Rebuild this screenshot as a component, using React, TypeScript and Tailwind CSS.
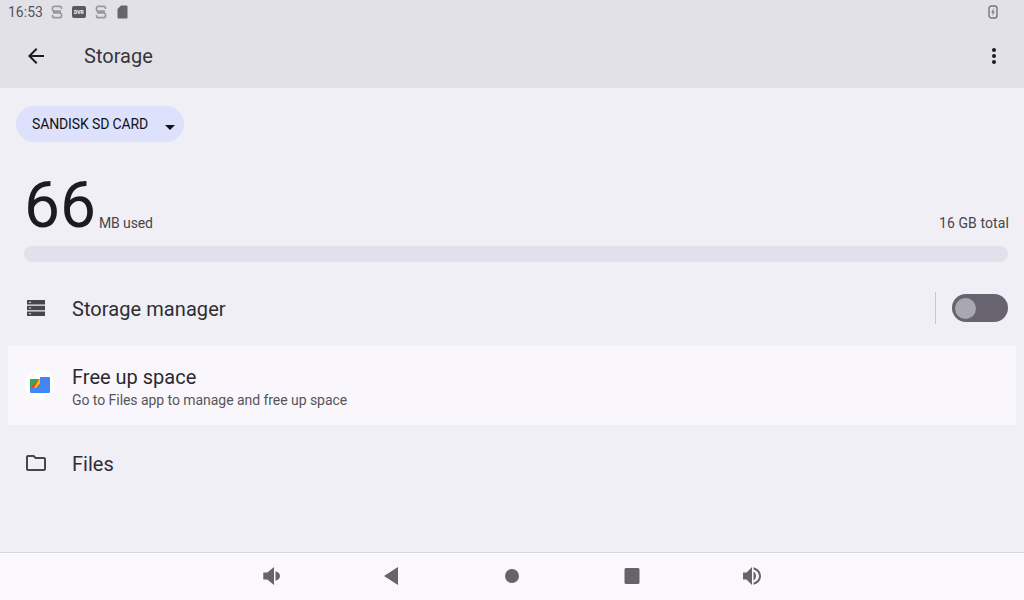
const font = { fontFamily: 'Roboto, sans-serif' }

function SyncS() {
  return (
    <svg width="12" height="14" viewBox="0 0 12 14" fill="none" stroke="#9a989f" strokeWidth="1.7">
      <path d="M10.500 4V3.300c0-1.300-1-2-2-2h-5c-1 0-2 .7-2 2v1.200c0 1 1 1.700 2 1.700H10" />
      <path d="M1.500 10v.7c0 1.300 1 2 2 2h5c1 0 2-.7 2-2V9.500c0-1-1-1.700-2-1.700H2" />
    </svg>
  )
}

function StatusBar() {
  return (
    <div className="flex h-6 items-center pl-[8px] pr-[26px]">
      <span className="text-[14px] leading-none text-[#55535a]">16:53</span>
      <span className="ml-[8px] flex"><SyncS /></span>
      <span className="ml-[9px] flex h-[12px] w-[14px] items-center justify-center rounded-[2px] bg-[#5b595f] text-[5px] font-bold leading-none text-white">
        DVR
      </span>
      <span className="ml-[9px] flex"><SyncS /></span>
      <svg className="ml-[10px]" width="11" height="14" viewBox="0 0 11 14">
        <path d="M4 .5h5.500a1 1 0 0 1 1 1v11a1 1 0 0 1-1 1h-8a1 1 0 0 1-1-1V4z" fill="#67656b" />
      </svg>
      <svg className="ml-auto" width="10" height="14" viewBox="0 0 10 14" fill="none">
        <rect x="1" y="1" width="8" height="12" rx="2.500" stroke="#77757b" strokeWidth="1.400" />
        <path d="M5.800 3 3.200 7.500h1.600l-.5 3.500 2.500-4.500H5.200z" fill="#77757b" />
      </svg>
    </div>
  )
}

function Toolbar() {
  return (
    <div className="flex h-16 items-center">
      <div className="flex w-[84px] justify-start pl-[24px]">
        <svg width="24" height="24" viewBox="0 0 24 24" fill="#1d1b20">
          <path d="M20 11H7.830l5.590-5.590L12 4l-8 8 8 8 1.410-1.410L7.830 13H20z" />
        </svg>
      </div>
      <span className="text-[20px] leading-none text-[#37353b]">Storage</span>
      <div className="ml-auto flex flex-col gap-[2px] pr-[28px]">
        <span className="h-1 w-1 rounded-full bg-[#1d1b20]" />
        <span className="h-1 w-1 rounded-full bg-[#1d1b20]" />
        <span className="h-1 w-1 rounded-full bg-[#1d1b20]" />
      </div>
    </div>
  )
}

function UsageSummary() {
  return (
    <div className="pl-6 pr-4">
      <div className="flex items-end justify-between">
        <div className="flex items-end">
          <span className="text-[64px] font-normal leading-[64px] text-[#1d1b20]">66</span>
          <span className="mb-[6px] ml-[3px] text-[14px] leading-[18px] tracking-[-0.1px] text-[#47454b]">MB used</span>
        </div>
        <span className="mb-[6px] mr-[-1px] text-[14px] leading-[18px] tracking-[0.1px] text-[#47454b]">16 GB total</span>
      </div>
      <div className="mt-[8px] h-4 rounded-full bg-[#e2e0ea]" />
    </div>
  )
}

function FilesLogo() {
  return (
    <div className="flex h-[29px] w-[29px] items-center justify-center rounded-full bg-white">
      <svg width="20" height="16" viewBox="0 0 20 16">
        <path d="M0 2h10v11H0z" fill="#ea4335" />
        <path d="M0 2h9L0 11z" fill="#34a853" />
        <path d="M9 2h1.500V6L6 11H4z" fill="#fbbc04" />
        <path d="M0 11h6.500L10 7V0h9a1 1 0 0 1 1 1v14a1 1 0 0 1-1 1H1a1 1 0 0 1-1-1z" fill="#4285f4" />
      </svg>
    </div>
  )
}

function NavBar() {
  return (
    <div className="flex h-[48px] items-center justify-center gap-[96px] border-t border-[#d9d7de] bg-[#faf8fc] pb-[1px]">
      <svg width="24" height="24" viewBox="0 0 24 24" fill="#66646a">
        <path d="M3.300 8.500v7h4l6.700 5.500V3L7.300 8.500z" />
        <path d="M15.500 7.200c2.600.6 4.500 2.600 4.500 4.800s-1.900 4.200-4.500 4.800z" />
      </svg>
      <svg width="24" height="24" viewBox="0 0 24 24" fill="#66646a">
        <path d="M18 3v18L4 12z" />
      </svg>
      <svg width="24" height="24" viewBox="0 0 24 24" fill="#66646a">
        <circle cx="12" cy="12" r="7" />
      </svg>
      <svg width="24" height="24" viewBox="0 0 24 24" fill="#66646a">
        <rect x="4.500" y="4" width="15" height="16" rx="1.500" />
      </svg>
      <svg width="24" height="24" viewBox="0 0 24 24" fill="#66646a">
        <path d="M3 8.500v7h3.500L12 21V3L6.500 8.500z" />
        <path d="M13.500 7.500c1.500.8 2.500 2.600 2.500 4.500s-1 3.700-2.500 4.500z" />
        <path d="M13.500 3.200v2.200c3 .9 5.500 3.500 5.500 6.600s-2.500 5.700-5.500 6.600v2.200c4.200-.9 7.500-4.500 7.500-8.800s-3.300-7.900-7.500-8.800z" />
      </svg>
    </div>
  )
}

export default function App() {
  return (
    <div className="flex h-[600px] w-[1024px] flex-col overflow-hidden bg-[#f0eff5]" style={font}>
      <div className="bg-[#e3e1e8]">
        <StatusBar />
        <Toolbar />
      </div>

      <div className="flex-1">
        <div className="px-4 pt-[18px]">
          <div className="flex h-9 w-[168px] items-center rounded-full bg-[#dee1fb] pl-4">
            <span className="text-[14px] leading-none tracking-[-0.13px] text-[#111118]">SANDISK SD CARD</span>
            <span className="ml-[17px] mt-[6px] h-0 w-0 border-x-[5px] border-t-[5px] border-x-transparent border-t-[#111118]" />
          </div>
        </div>

        <div className="pt-[32px]">
          <UsageSummary />
        </div>

        <div className="mb-[2px] mt-[10px] flex h-[72px] items-center pl-6 pr-4">
          <div className="flex w-[48px]">
            <svg width="24" height="24" viewBox="0 0 24 24" fill="#47454d">
              <path d="M3 4h18v4.500H3zm0 5.800h18v4.500H3zm0 5.700h18V20H3z" />
              <path d="M5 5.700h2v1.100H5zM5 11.500h2v1.100H5zM5 17.200h2v1.100H5z" fill="#f0eff5" />
            </svg>
          </div>
          <span className="mt-[2px] text-[20px] leading-none tracking-[0.07px] text-[#2f2d33]">Storage manager</span>
          <div className="ml-auto flex items-center">
            <div className="h-8 w-px bg-[#c9c7cd]" />
            <div className="ml-4 flex h-7 w-14 items-center rounded-full bg-[#67646f] pl-[3px]">
              <div className="h-[21px] w-[21px] rounded-full bg-[#a9a7b0]" />
            </div>
          </div>
        </div>

        <div className="mx-2 flex h-[79px] items-start rounded-[2px] bg-[#faf7fc] pl-[17px]">
          <div className="flex w-[47px] pt-[24px]">
            <FilesLogo />
          </div>
          <div className="pt-[19px]">
            <div className="text-[20px] leading-[24px] text-[#2b292f]">Free up space</div>
            <div className="mt-[1px] text-[14px] leading-[20px] tracking-[-0.05px] text-[#56545b]">Go to Files app to manage and free up space</div>
          </div>
        </div>

        <div className="flex h-[78px] items-center pl-6">
          <div className="mb-[2px] flex w-[48px]">
            <svg width="24" height="24" viewBox="0 0 24 24" fill="#47454d">
              <path d="M9.170 6l2 2H20v10H4V6h5.170M10 4H4c-1.100 0-1.990.9-1.990 2L2 18c0 1.100.9 2 2 2h16c1.100 0 2-.9 2-2V8c0-1.100-.9-2-2-2h-8l-2-2z" />
            </svg>
          </div>
          <span className="text-[20px] leading-none text-[#2f2d33]">Files</span>
        </div>
      </div>

      <NavBar />
    </div>
  )
}
